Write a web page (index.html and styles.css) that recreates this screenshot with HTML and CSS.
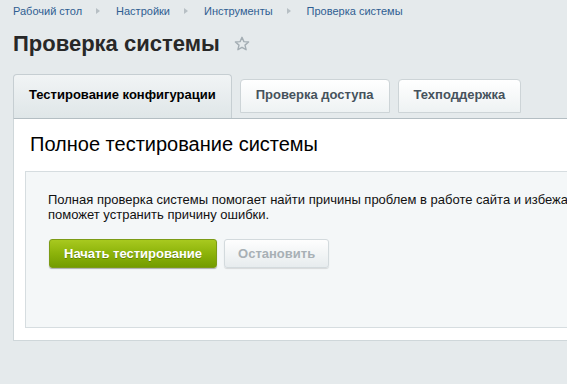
FILE: index.html
```html
<!DOCTYPE html>
<html lang="ru">
<head>
<meta charset="utf-8">
<title>Проверка системы</title>
<link rel="stylesheet" href="styles.css">
</head>
<body>
<div class="page">
  <nav class="crumbs">
    <a class="crumb">Рабочий стол</a><span class="sep"></span>
    <a class="crumb">Настройки</a><span class="sep"></span>
    <a class="crumb">Инструменты</a><span class="sep"></span>
    <a class="crumb">Проверка системы</a>
  </nav>
  <h1 class="title">Проверка системы
    <svg class="star" width="16" height="16" viewBox="0 0 16 16"><path d="M8 1.3 L9.9 5.6 L14.6 6 L11 9.1 L12.1 13.7 L8 11.3 L3.9 13.7 L5 9.1 L1.4 6 L6.1 5.6 Z" fill="none" stroke="#a4aeb4" stroke-width="1.4" stroke-linejoin="round"/></svg>
  </h1>
  <div class="tabs">
    <div class="tab active">Тестирование конфигурации</div>
    <div class="tab">Проверка доступа</div>
    <div class="tab">Техподдержка</div>
  </div>
  <div class="panel">
    <h2 class="heading">Полное тестирование системы</h2>
    <div class="box">
      <p class="desc">Полная проверка системы помогает найти причины проблем в работе сайта и избежать<br>поможет устранить причину ошибки.</p>
      <div class="btns">
        <button class="btn btn-green">Начать тестирование</button>
        <button class="btn btn-gray">Остановить</button>
      </div>
    </div>
  </div>
</div>
</body>
</html>
```
FILE: styles.css
```css
html, body {
  margin: 0;
  background: #e5eaec;
  overflow: hidden;
}
body {
  font-family: Arial, "Liberation Sans", sans-serif;
  color: #000;
}
.page {
  padding-left: 13px;
  margin-right: -40px;
}
.crumbs {
  display: flex;
  align-items: center;
  padding-top: 4px;
  height: 14px;
  font-size: 11px;
  line-height: 14px;
  white-space: nowrap;
}
.crumb {
  color: #2f5e92;
  text-decoration: none;
}
.sep {
  width: 0;
  height: 0;
  border-top: 3.5px solid transparent;
  border-bottom: 3.5px solid transparent;
  border-left: 4px solid #b7bfc4;
  margin: 0 16px 0 14px;
}
.title {
  display: flex;
  align-items: center;
  margin: 13px 0 0;
  font-size: 22px;
  line-height: 26px;
  font-weight: bold;
  color: #282828;
}
.star {
  margin-left: 14px;
}
.tabs {
  display: flex;
  align-items: flex-end;
  gap: 8px;
  margin-top: 17px;
}
.tab {
  font-size: 13px;
  font-weight: bold;
  padding: 0 15px 2px;
  line-height: 30px;
  color: #46525c;
  border: 1px solid #cdd4d7;
  border-radius: 4px 4px 0 0;
  background: linear-gradient(#ffffff, #eef2f3);
  margin-bottom: 5px;
  white-space: nowrap;
}
.tab.active {
  color: #000;
  line-height: 40px;
  padding: 0 15px 3px 15px;
  border-color: #c6ced2;
  border-bottom: none;
  margin-bottom: 0;
  background: linear-gradient(#f1f4f5, #dfe6e8);
}
.panel {
  background: #fff;
  border-top: 1px solid #b4bec3;
  border-left: 1px solid #cfd7da;
  border-bottom: 1px solid #cfd7da;
  padding: 13px 0 12px 11px;
}
.heading {
  margin: 0 0 15px 5px;
  font-size: 20px;
  line-height: 24px;
  font-weight: normal;
  color: #000;
}
.box {
  background: #f4f7f8;
  border: 1px solid #d6dde0;
  border-right: none;
  padding: 20px 0 59px 22px;
}
.desc {
  margin: 0;
  font-size: 13px;
  line-height: 15px;
  color: #111;
}
.btns {
  display: flex;
  gap: 7px;
  margin: 17px 0 0 1px;
}
.btn {
  font-family: Arial, "Liberation Sans", sans-serif;
  font-size: 13px;
  font-weight: bold;
  height: 29px;
  line-height: 27px;
  padding: 0 14px;
  border-radius: 3px;
  cursor: default;
}
.btn-green {
  color: #fff;
  background: linear-gradient(#a8c91f, #8cb30a 50%, #739c00);
  border: 1px solid #7c9b16;
  box-shadow: 0 1px 1px rgba(0, 0, 0, 0.3);
  text-shadow: 0 1px 0 rgba(60, 80, 0, 0.45);
}
.btn-gray {
  color: #a8b0b5;
  padding: 0 13px;
  background: linear-gradient(#fefefe, #e7ecee);
  border: 1px solid #d3dadd;
  box-shadow: 0 1px 1px rgba(0, 0, 0, 0.12);
}
```
